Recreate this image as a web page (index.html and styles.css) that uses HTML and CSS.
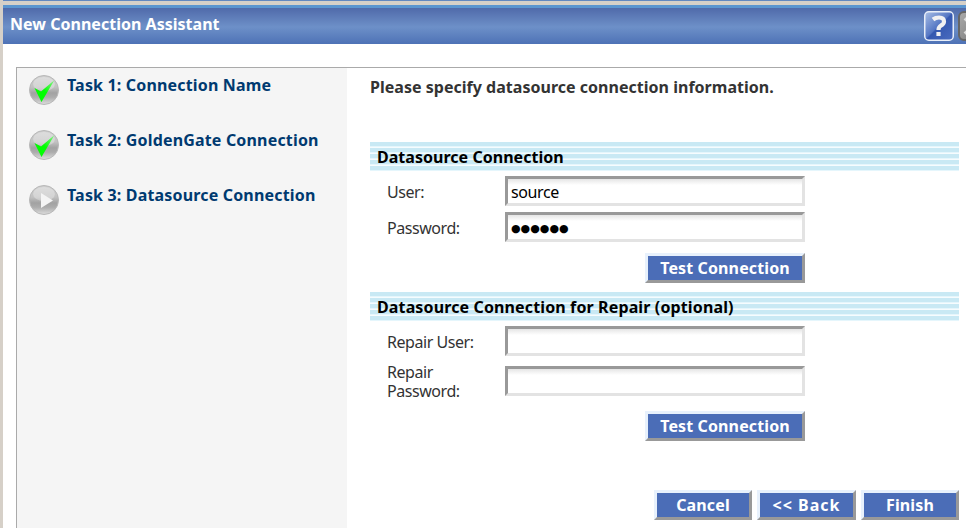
FILE: index.html
```html
<!DOCTYPE html>
<html lang="en">
<head>
<meta charset="utf-8">
<title>New Connection Assistant</title>
<link rel="stylesheet" href="styles.css">
</head>
<body>
<svg class="defs" width="0" height="0" aria-hidden="true">
  <defs>
    <linearGradient id="ball" x1="0" y1="0" x2="0" y2="1">
      <stop offset="0" stop-color="#d0d0d0"/><stop offset=".4" stop-color="#c2c2c2"/>
      <stop offset=".6" stop-color="#a2a2a2"/><stop offset=".75" stop-color="#acacac"/><stop offset="1" stop-color="#dedede"/>
    </linearGradient>
    <linearGradient id="tick" x1="0" y1="1" x2="1" y2="0">
      <stop offset=".5" stop-color="#00ff00"/><stop offset="1" stop-color="#90f090"/>
    </linearGradient>
    <linearGradient id="help" x1="0" y1="0" x2="1" y2="1">
      <stop offset="0" stop-color="#a9bfe6"/><stop offset=".48" stop-color="#5577c4"/>
      <stop offset=".52" stop-color="#3558b0"/><stop offset="1" stop-color="#4a6cc0"/>
    </linearGradient>
    <linearGradient id="close" x1="0" y1="0" x2="1" y2="1">
      <stop offset="0" stop-color="#aaa"/><stop offset="1" stop-color="#777"/>
    </linearGradient>
    <symbol id="done" viewBox="0 0 30 30">
      <circle cx="15" cy="15" r="14.500" fill="url(#ball)" stroke="#b8b8b8"/>
      <ellipse cx="15" cy="9" rx="11" ry="7" fill="#fff" opacity=".3"/>
      <path d="M5.500 13L12 16.500L25.500 5L12.500 27Z" fill="url(#tick)"/>
    </symbol>
    <symbol id="current" viewBox="0 0 30 30">
      <circle cx="15" cy="15" r="14.500" fill="url(#ball)" stroke="#b8b8b8"/>
      <ellipse cx="15" cy="9" rx="11" ry="7" fill="#fff" opacity=".3"/>
      <path d="M12 8L24 15.500L12 23Z" fill="#f4f4f4"/>
    </symbol>
  </defs>
</svg>
<div class="window">
  <header class="titlebar">
    <h1>New Connection Assistant</h1>
    <div class="tools">
      <svg width="30" height="30" viewBox="0 0 30 30"><rect x=".75" y=".75" width="28.500" height="28.500" rx="4" fill="url(#help)" stroke="#e8eef8" stroke-width="1.500"/><path d="M9 8.500Q11.500 6.500 15 6.500Q20 6.500 20 10.500Q20 13 17 14.500Q14.500 16 14.500 19M14.500 21V25" fill="none" stroke="#f0f0f2" stroke-width="4.200"/></svg>
      <svg width="30" height="30" viewBox="0 0 30 30"><rect x="1" y="1" width="28" height="28" rx="5" fill="url(#close)" stroke="#666" stroke-width="2"/><path d="M7 7L23 23M23 7L7 23" stroke="#ddd" stroke-width="4"/></svg>
    </div>
  </header>
  <div class="body">
    <nav class="tasks">
      <div class="task"><svg width="30" height="30"><use href="#done"/></svg><span>Task 1: Connection Name</span></div>
      <div class="task"><svg width="30" height="30"><use href="#done"/></svg><span>Task 2: GoldenGate Connection</span></div>
      <div class="task"><svg width="30" height="30"><use href="#current"/></svg><span>Task 3: Datasource Connection</span></div>
    </nav>
    <main class="content">
      <p class="intro">Please specify datasource connection information.</p>
      <h2>Datasource Connection</h2>
      <div class="row first"><label for="u">User:</label><input id="u" type="text" value="source"></div>
      <div class="row second"><label>Password:</label><div class="field">●●●●●●</div></div>
      <div class="test"><button>Test Connection</button></div>
      <h2 class="repair">Datasource Connection for Repair (optional)</h2>
      <div class="row first"><label for="ru">Repair User:</label><input id="ru" type="text"></div>
      <div class="row third"><label class="wrap" for="rp">Repair Password:</label><input id="rp" type="password"></div>
      <div class="test lower"><button>Test Connection</button></div>
      <footer class="actions"><button>Cancel</button><button class="back">&lt;&lt; Back</button><button>Finish</button></footer>
    </main>
  </div>
</div>
</body>
</html>
```
FILE: styles.css
```css
* { box-sizing: border-box; }
body { margin: 0; width: 966px; height: 528px; overflow: hidden; background: #fff; font: 16px/19px "Noto Sans", "Liberation Sans", sans-serif; color: #333; }
.defs { position: absolute; }
svg { display: block; flex: none; }
.window { height: 528px; border-left: 3px solid #d6d0c8; display: flex; flex-direction: column; overflow: hidden; }
.window::before { content: ""; flex: none; height: 5px; margin-left: -3px; background: linear-gradient(#6288c0 1px, #d6d0c8 1px); }
.titlebar { flex: none; height: 39px; display: flex; justify-content: space-between; padding-left: 7px; background: linear-gradient(#5b95cf 0 3px, #506aaa 3px, #6d90c8 22px, #4e72b6 39px); }
h1 { margin: 0; padding-top: 9px; font-size: 16px; line-height: 20px; color: #fff; letter-spacing: .02px; white-space: nowrap; }
.tools { display: flex; gap: 4px; padding-top: 6px; margin-right: -22px; }
.body { flex: 1; display: flex; margin: 23px 0 0 13px; border: solid #aaa; border-width: 1px 0 0 1px; }
.tasks { width: 330px; background: #f5f5f5; padding: 7px 0 0 12px; flex: none; }
.task { display: flex; gap: 8px; height: 55px; font-weight: bold; color: #003a70; white-space: nowrap; letter-spacing: .17px; line-height: 21px; }
.content { flex: none; width: 612px; padding: 9px 0 0 23px; }
.intro { margin: 0; height: 65px; line-height: 21px; font-weight: bold; letter-spacing: .02px; white-space: nowrap; }
h2 { margin: 0; height: 29px; padding-left: 7px; font-size: 16px; line-height: 30px; color: #000; letter-spacing: .03px; white-space: nowrap; background: repeating-linear-gradient(#c9e9f4 0 4px, #e5f6fc 4px 5px, #f6fcfe 5px 6px); }
.repair { letter-spacing: .13px; }
.row { display: flex; align-items: center; padding-left: 17px; height: 30px; letter-spacing: -.45px; }
.row label { width: 118px; padding-top: 2px; }
.row .wrap { padding-right: 40px; }
.first { margin-top: 5px; }
.second { margin-top: 6px; }
.third { margin-top: 10px; }
input, .field { width: 300px; height: 30px; border: 3px solid; border-color: #999 #e3e3e3 #e3e3e3 #999; background: linear-gradient(#e5e5e5, #fff 6px); padding: 2px 3px 0; font: 16px/22px "Noto Sans", sans-serif; color: #000; letter-spacing: -.4px; border-radius: 0; outline: 0; }
.field { font: 11px/24px "DejaVu Sans", sans-serif; letter-spacing: 0; }
.test { width: 435px; display: flex; justify-content: flex-end; margin: 11px 0 9px; }
.lower { margin-top: 15px; }
button { font: bold 16px/20px "Noto Sans", sans-serif; letter-spacing: .12px; color: #fff; background: #4b6db7; border: 3px solid; border-color: #e8f1fc #999 #999 #e8f1fc; width: 160px; height: 30px; padding: 0; white-space: nowrap; border-radius: 0; }
.actions { display: flex; justify-content: flex-end; gap: 5px; margin-top: 49px; }
.actions button { width: 98px; }
.actions .back { width: 99px; letter-spacing: 1px; }
```
